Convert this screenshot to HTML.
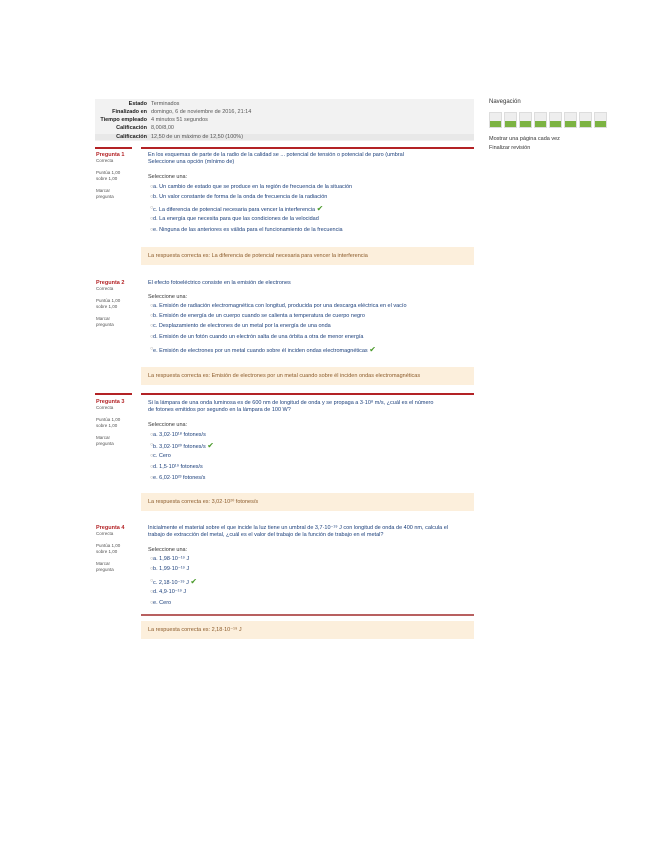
<!DOCTYPE html>
<html><head><meta charset="utf-8"><style>
body{margin:0;width:655px;height:848px;background:#fff;font-family:"Liberation Sans",sans-serif;position:relative;overflow:hidden}
div,span{position:absolute;white-space:nowrap}
.t{font-size:5.5px;color:#333;line-height:7px}
.b{color:#1a3e7a}
.lbl{font-size:5.5px;color:#222;text-align:right;width:52px;left:95px;font-weight:bold}
.val{font-size:5.5px;color:#555;left:151px}
.red{height:1.5px;background:#b32225}
.fb{background:#fcefdc;left:141px;width:333px;height:18px}
.fb span{left:7px;top:6px;font-size:5.5px;color:#8a5a2a}
.side{left:96px;font-size:4.5px;color:#555;line-height:6px}
.side b{color:#b32225;font-size:5.5px}
.ck{color:#4a9a2a;font-size:8px}
.rd{font-size:5.5px;color:#999}
.nb{width:13px;height:16px;background:#eee;border:1px solid #ddd;box-sizing:border-box}
.nb i{position:absolute;left:0;right:0;bottom:0;height:6px;background:#7cb342}
</style></head><body>
<div style="left:95px;top:99px;width:379px;height:42px;background:#f2f2f2"></div>
<div style="left:95px;top:134px;width:379px;height:6px;background:#e8e8e8"></div>
<div class="lbl" style="top:101px">Estado</div><div class="val" style="top:101px">Terminados</div>
<div class="lbl" style="top:109px">Finalizado en</div><div class="val" style="top:109px">domingo, 6 de noviembre de 2016, 21:14</div>
<div class="lbl" style="top:117px">Tiempo empleado</div><div class="val" style="top:117px">4 minutos 51 segundos</div>
<div class="lbl" style="top:125px">Calificación</div><div class="val" style="top:125px">8,00/8,00</div>
<div class="lbl" style="top:134px">Calificación</div><div class="val" style="top:134px">12,50 de un máximo de 12,50 (100%)</div>

<div class="t" style="left:489px;top:99px;font-size:6px">Navegación</div>
<div style="left:489px;top:112px">
<div class="nb" style="left:0"><i></i></div><div class="nb" style="left:15px"><i></i></div><div class="nb" style="left:30px"><i></i></div><div class="nb" style="left:45px"><i></i></div><div class="nb" style="left:60px"><i></i></div><div class="nb" style="left:75px"><i></i></div><div class="nb" style="left:90px"><i></i></div><div class="nb" style="left:105px"><i></i></div>
</div>
<div class="t" style="left:489px;top:136px">Mostrar una página cada vez</div>
<div class="t" style="left:489px;top:145px">Finalizar revisión</div>

<div class="red" style="left:95px;top:147px;width:37px"></div>
<div class="red" style="left:141px;top:147px;width:333px"></div>
<div class="side" style="top:152px"><b>Pregunta 1</b><br>Correcta<br><br>Puntúa 1,00<br>sobre 1,00<br><br>Marcar<br>pregunta</div>
<div class="t b" style="left:148px;top:152px">En los esquemas de parte de la radio de la calidad se ... potencial de tensión o potencial de paro (umbral</div>
<div class="t b" style="left:148px;top:159px">Seleccione una opción (mínimo de)</div>
<div class="t" style="left:148px;top:174px">Seleccione una:</div>
<div class="t b" style="left:150px;top:184px"><span class="rd">○</span> &nbsp; a. Un cambio de estado que se produce en la región de frecuencia de la situación</div>
<div class="t b" style="left:150px;top:194px"><span class="rd">○</span> &nbsp; b. Un valor constante de forma de la onda de frecuencia de la radiación</div>
<div class="t b" style="left:150px;top:205px"><span class="rd">○</span> &nbsp; c. La diferencia de potencial necesaria para vencer la interferencia <span class="ck" style="position:static">✔</span></div>
<div class="t b" style="left:150px;top:216px"><span class="rd">○</span> &nbsp; d. La energía que necesita para que las condiciones de la velocidad</div>
<div class="t b" style="left:150px;top:227px"><span class="rd">○</span> &nbsp; e. Ninguna de las anteriores es válida para el funcionamiento de la frecuencia</div>
<div class="fb" style="top:247px"><span>La respuesta correcta es: La diferencia de potencial necesaria para vencer la interferencia</span></div>

<div class="side" style="top:280px"><b>Pregunta 2</b><br>Correcta<br><br>Puntúa 1,00<br>sobre 1,00<br><br>Marcar<br>pregunta</div>
<div class="t b" style="left:148px;top:280px">El efecto fotoeléctrico consiste en la emisión de electrones</div>
<div class="t" style="left:148px;top:294px">Seleccione una:</div>
<div class="t b" style="left:150px;top:303px"><span class="rd">○</span> &nbsp; a. Emisión de radiación electromagnética con longitud, producida por una descarga eléctrica en el vacío</div>
<div class="t b" style="left:150px;top:313px"><span class="rd">○</span> &nbsp; b. Emisión de energía de un cuerpo cuando se calienta a temperatura de cuerpo negro</div>
<div class="t b" style="left:150px;top:323px"><span class="rd">○</span> &nbsp; c. Desplazamiento de electrones de un metal por la energía de una onda</div>
<div class="t b" style="left:150px;top:334px"><span class="rd">○</span> &nbsp; d. Emisión de un fotón cuando un electrón salta de una órbita a otra de menor energía</div>
<div class="t b" style="left:150px;top:346px"><span class="rd">○</span> &nbsp; e. Emisión de electrones por un metal cuando sobre él inciden ondas electromagnéticas <span class="ck" style="position:static">✔</span></div>
<div class="fb" style="top:367px"><span>La respuesta correcta es: Emisión de electrones por un metal cuando sobre él inciden ondas electromagnéticas</span></div>

<div class="red" style="left:95px;top:393px;width:37px"></div>
<div class="red" style="left:141px;top:393px;width:333px"></div>
<div class="side" style="top:399px"><b>Pregunta 3</b><br>Correcta<br><br>Puntúa 1,00<br>sobre 1,00<br><br>Marcar<br>pregunta</div>
<div class="t b" style="left:148px;top:400px">Si la lámpara de una onda luminosa es de 600 nm de longitud de onda y se propaga a 3·10⁸ m/s, ¿cuál es el número</div>
<div class="t b" style="left:148px;top:407px">de fotones emitidos por segundo en la lámpara de 100 W?</div>
<div class="t" style="left:148px;top:422px">Seleccione una:</div>
<div class="t b" style="left:150px;top:432px"><span class="rd">○</span> &nbsp; a. 3,02·10¹⁸ fotones/s</div>
<div class="t b" style="left:150px;top:442px"><span class="rd">○</span> &nbsp; b. 3,02·10²⁰ fotones/s <span class="ck" style="position:static">✔</span></div>
<div class="t b" style="left:150px;top:453px"><span class="rd">○</span> &nbsp; c. Cero</div>
<div class="t b" style="left:150px;top:464px"><span class="rd">○</span> &nbsp; d. 1,5·10¹⁹ fotones/s</div>
<div class="t b" style="left:150px;top:475px"><span class="rd">○</span> &nbsp; e. 6,02·10²³ fotones/s</div>
<div class="fb" style="top:493px"><span>La respuesta correcta es: 3,02·10²⁰ fotones/s</span></div>

<div class="side" style="top:525px"><b>Pregunta 4</b><br>Correcta<br><br>Puntúa 1,00<br>sobre 1,00<br><br>Marcar<br>pregunta</div>
<div class="t b" style="left:148px;top:525px">Inicialmente el material sobre el que incide la luz tiene un umbral de 3,7·10⁻¹⁹ J con longitud de onda de 400 nm, calcula el</div>
<div class="t b" style="left:148px;top:532px">trabajo de extracción del metal, ¿cuál es el valor del trabajo de la función de trabajo en el metal?</div>
<div class="t" style="left:148px;top:547px">Seleccione una:</div>
<div class="t b" style="left:150px;top:556px"><span class="rd">○</span> &nbsp; a. 1,98·10⁻¹⁹ J</div>
<div class="t b" style="left:150px;top:566px"><span class="rd">○</span> &nbsp; b. 1,99·10⁻¹⁹ J</div>
<div class="t b" style="left:150px;top:578px"><span class="rd">○</span> &nbsp; c. 2,18·10⁻¹⁹ J <span class="ck" style="position:static">✔</span></div>
<div class="t b" style="left:150px;top:589px"><span class="rd">○</span> &nbsp; d. 4,9·10⁻¹⁹ J</div>
<div class="t b" style="left:150px;top:600px"><span class="rd">○</span> &nbsp; e. Cero</div>
<div class="red" style="left:141px;top:614px;width:333px;background:#b86060"></div>
<div class="fb" style="top:621px"><span>La respuesta correcta es: 2,18·10⁻¹⁹ J</span></div>
</body></html>
